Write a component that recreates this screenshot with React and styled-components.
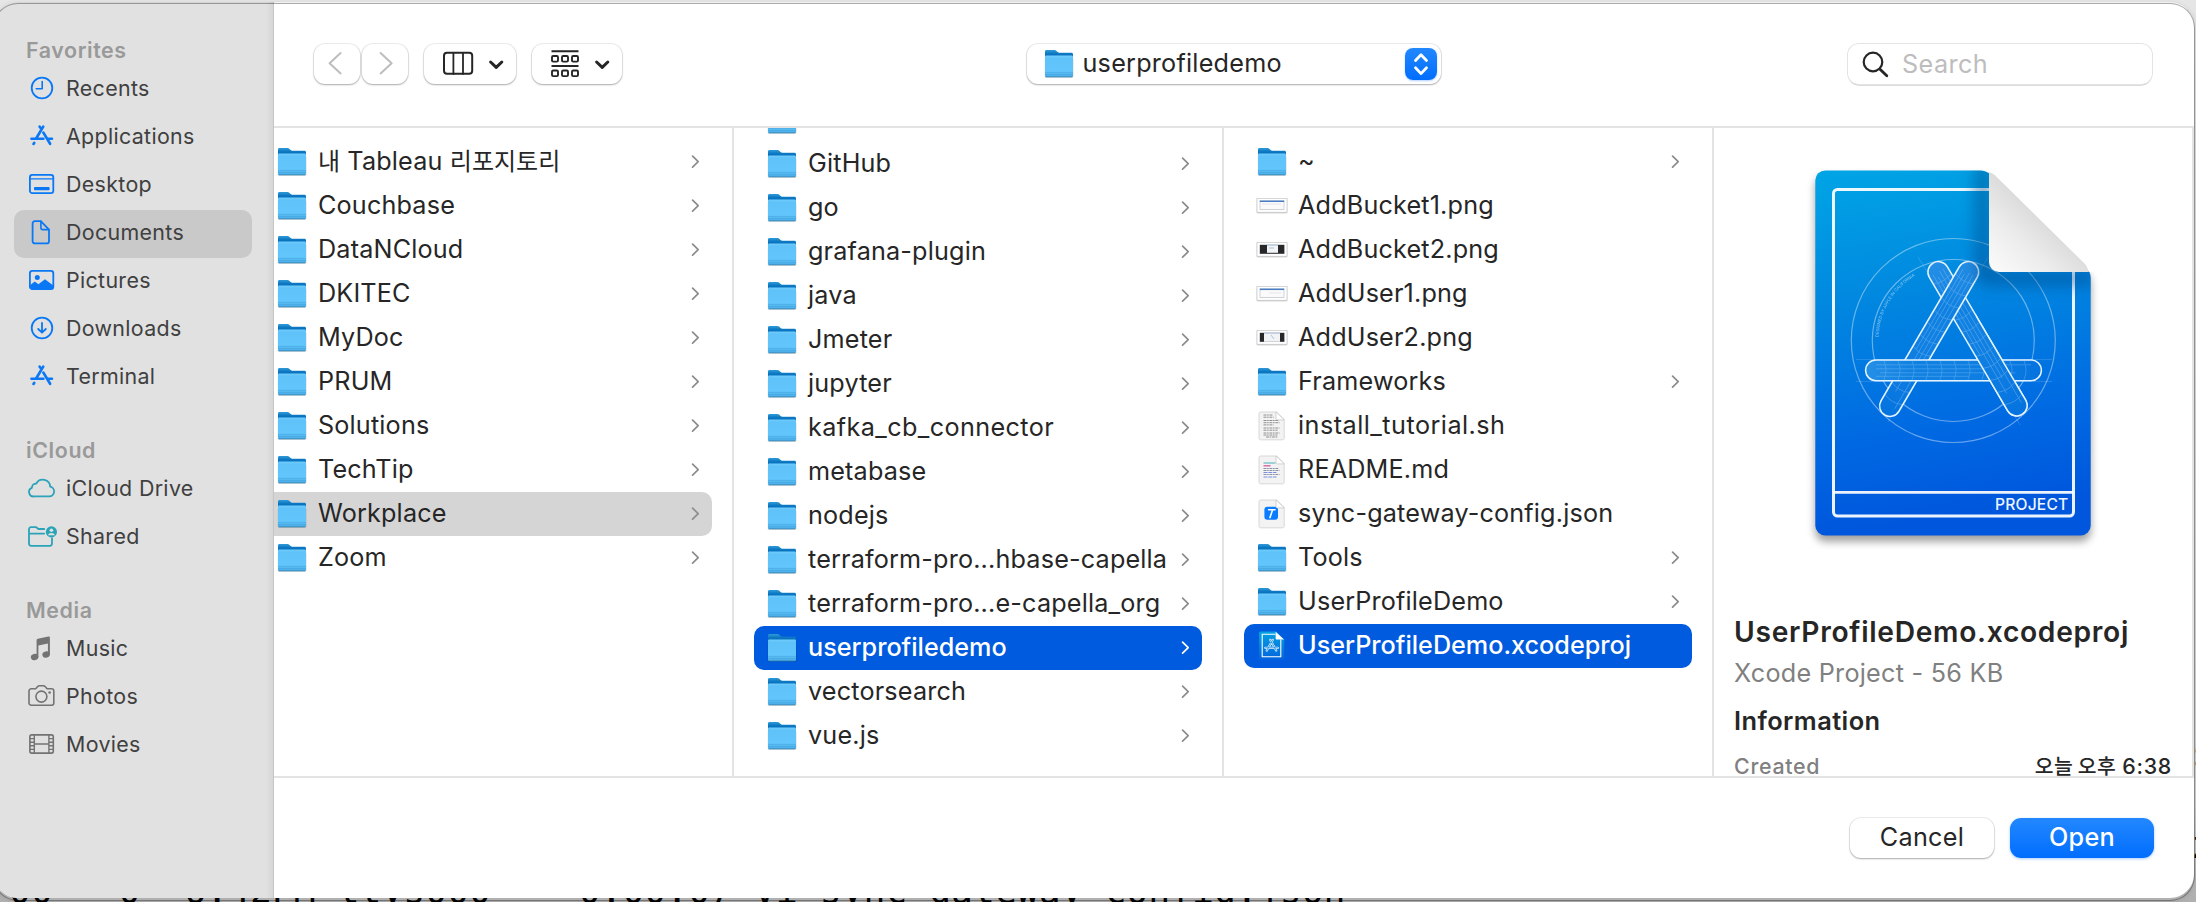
import React from "react";
import styled, { createGlobalStyle, css } from "styled-components";

const sans = `Inter, "Noto Sans CJK KR", "Liberation Sans", sans-serif`;

const GlobalStyle = createGlobalStyle`
  *, *::before, *::after { box-sizing: border-box; }
  body { margin: 0; overflow: hidden; font-family: ${sans}; color: #262626; }
`;

/* ---------- desktop and window ---------- */

const Desktop = styled.div`
  position: relative;
  width: 2196px;
  height: 902px;
  overflow: hidden;
  background: linear-gradient(#e6e6e6 0, #dedede 70px, #cfcfcf 800px, #b0b0b0 895px);
`;

const TerminalText = styled.span`
  position: absolute;
  left: ${(p) => p.$x}px;
  top: ${(p) => p.$y}px;
  font: 36.4px/40px "DejaVu Sans Mono", monospace;
  white-space: pre;
  color: #000;
`;

const Window = styled.main`
  position: relative;
  display: flex;
  width: 2200px;
  height: 896px;
  margin: 2px 0 0 -6px;
  border-radius: 24px;
  background: #fff;
  overflow: hidden;
`;

const WindowFrame = styled.div`
  position: relative;
  width: 2194px;
  height: 898px;
  &::after {
    content: "";
    position: absolute;
    inset: 2px 0 0 -6px;
    border-radius: 24px;
    box-shadow: 0 0 0 1px rgba(0, 0, 0, 0.28), 0 0 5px rgba(0, 0, 0, 0.18);
    pointer-events: none;
  }
`;

/* ---------- sidebar ---------- */

const Sidebar = styled.nav`
  flex: 0 0 280px;
  padding: 0 21px 0 20px;
  background: linear-gradient(90deg, #e1e1e1 272px, #d6d6d6 279px);
  border-right: 1px solid #c6c6c6;
`;

const SectionTitle = styled.h2`
  display: flex;
  align-items: flex-end;
  height: 64px;
  margin: 0;
  padding-left: 12px;
  font-size: 21.4px;
  line-height: 31px;
  font-weight: 600;
  letter-spacing: 0.6px;
  color: #999;
`;

const Place = styled.a`
  display: flex;
  align-items: center;
  gap: 10px;
  height: 48px;
  width: 238px;
  padding-left: 14px;
  border-radius: 10px;
  font-size: 21.4px;
  letter-spacing: 0.33px;
  color: #404040;
  background: ${(p) => (p.$active ? "#c9c9c9" : "transparent")};
`;

const PlaceIcon = styled.svg`
  flex: none;
  width: 28px;
  height: 28px;
  overflow: visible;
  margin-bottom: 5px;
  color: ${(p) => p.$tint};
  fill: none;
  stroke: currentColor;
  stroke-width: 1.8;
  stroke-linecap: round;
  stroke-linejoin: round;
`;

const PlaceName = styled.span`
  padding-bottom: 5px;
`;

/* ---------- toolbar ---------- */

const Content = styled.section`
  flex: 1;
  min-width: 0;
  display: flex;
  flex-direction: column;
`;

const Toolbar = styled.header`
  display: grid;
  grid-template-columns: 1fr auto 1fr;
  align-items: center;
  height: 126px;
  padding: 0 42px 0 40px;
  border-bottom: 2px solid #e3e3e3;
`;

const ToolGroup = styled.div`
  display: flex;
  gap: ${(p) => p.$gap}px;
`;

const raised = css`
  border: 0;
  background: #fff;
  border-radius: 11px;
  box-shadow: 0 0 0 1px rgba(0, 0, 0, 0.07), 0 1px 2px rgba(0, 0, 0, 0.28);
`;

const ToolButton = styled.button`
  ${raised}
  display: flex;
  align-items: center;
  justify-content: center;
  width: ${(p) => p.$width}px;
  height: 40px;
  padding: 0;
`;

const ToolGlyph = styled.svg`
  display: block;
  fill: none;
  stroke: ${(p) => p.$ink || "#262626"};
  stroke-linecap: round;
  stroke-linejoin: round;
`;

const PathPopup = styled.button`
  ${raised}
  display: flex;
  align-items: center;
  width: 414px;
  height: 40px;
  margin-left: 1px;
  padding: 0 4px 0 17px;
  font: 400 25.2px ${sans};
  letter-spacing: 0.23px;
  color: #262626;
`;

const PathName = styled.span`
  flex: 1;
  padding: 0 0 2px 9px;
  text-align: left;
`;

const Stepper = styled.span`
  display: flex;
  align-items: center;
  justify-content: center;
  width: 32px;
  height: 32px;
  border-radius: 8px;
  background: linear-gradient(#2388ff, #006dfd);
  box-shadow: 0 1px 2px rgba(0, 100, 255, 0.3);
`;

const SearchField = styled.label`
  justify-self: end;
  display: flex;
  align-items: center;
  width: 304px;
  height: 40px;
  padding-left: 14px;
  border-radius: 11px;
  box-shadow: 0 0 0 1px #e4e4e4, 0 1.5px 0 #b9b9b9;
  background: #fff;
`;

const SearchHint = styled.span`
  padding: 0 0 0 13px;
  font-size: 25.2px;
  letter-spacing: 0.4px;
  color: #bdbdbd;
`;

/* ---------- column browser ---------- */

const Browser = styled.div`
  display: flex;
  height: 650px;
  overflow: hidden;
  border-bottom: 2px solid #e3e3e3;
`;

const Column = styled.ul`
  flex: 0 0 490px;
  height: 648px;
  margin: 0 0 0 ${(p) => (p.$scrolledX ? -p.$scrolledX : 0)}px;
  padding: 0 20px;
  overflow: hidden;
  list-style: none;
  border-right: 2px solid #e3e3e3;
`;

const ColumnItems = styled.div`
  margin-top: ${(p) => p.$offset}px;
`;

const rowTone = {
  none: css`color: #262626;`,
  path: css`color: #262626; background: #d5d5d5;`,
  active: css`color: #fff; background: #005bde; font-weight: 500; letter-spacing: 0;`,
};

const Row = styled.li`
  display: flex;
  align-items: center;
  height: 44px;
  padding: 0 13px;
  border-radius: 10px;
  font-size: 25.2px;
  letter-spacing: ${(p) => p.$track ?? 0.17}px;
  white-space: nowrap;
  ${(p) => rowTone[p.$tone]}
`;

const RowName = styled.span`
  flex: 1;
  padding: 0 0 2px 11px;
`;

const Hangul = styled.span`
  font-family: "Noto Sans CJK KR", sans-serif;
  font-size: ${(p) => p.$size}px;
  letter-spacing: ${(p) => p.$track || 0}px;
  line-height: 1;
`;

const FileIcon = styled.svg`
  flex: none;
  display: block;
  width: 30px;
  height: 30px;
  overflow: visible;
`;

/* ---------- preview ---------- */

const Preview = styled.aside`
  flex: 1;
  height: 648px;
  padding: 32px 20px 0 20px;
  overflow: hidden;
  border-right: 2px solid #e3e3e3;
  line-height: 32px;
`;

const Artwork = styled.svg`
  display: block;
  margin-left: 66px;
  width: 310px;
  height: 390px;
`;

const PreviewTitle = styled.h1`
  margin: 64px 0 0;
  font-size: 28.2px;
  line-height: 36px;
  font-weight: 600;
  letter-spacing: 0.7px;
  white-space: nowrap;
`;

const PreviewKind = styled.p`
  margin: 7px 0 0;
  font-size: 25.2px;
  letter-spacing: 0.26px;
  color: #808080;
`;

const PreviewHeading = styled.h2`
  margin: 16px 0 0;
  font-size: 25.4px;
  font-weight: 600;
  letter-spacing: 0.45px;
`;

const Fact = styled.div`
  display: flex;
  justify-content: space-between;
  margin-top: 15px;
  font-size: 21.4px;
  line-height: 28px;
  font-weight: 500;
  letter-spacing: 0.7px;
`;

const FactName = styled.span`
  color: #808080;
`;

/* ---------- footer ---------- */

const Footer = styled.footer`
  flex: 1;
  display: flex;
  align-items: center;
  justify-content: flex-end;
  gap: 16px;
  padding-right: 40px;
`;

const DialogButton = styled.button`
  ${raised}
  width: 144px;
  height: 40px;
  padding: 0 0 2px;
  font: 400 25.2px ${sans};
  letter-spacing: 0.3px;
  color: #262626;
  ${(p) =>
    p.$primary &&
    css`
      color: #fff;
      font-weight: 500;
      background: linear-gradient(#2388ff, #006dfd);
      box-shadow: 0 1px 3px rgba(0, 110, 255, 0.35);
    `}
`;

/* ---------- drawings ---------- */

const sidebarGlyphs = {
  clock: (
    <>
      <circle cx="14" cy="14" r="10.3" />
      <path d="M14.2 7.5v7.2H8.2" strokeWidth="1.6" />
    </>
  ),
  apps: (
    <g strokeWidth="2.7">
      <path d="M15.2 4.6 8.3 16.2M11.6 4.6l.6 1M15.4 10.6l6.7 11.2M6.2 20.9l-.7 1" />
      <path d="M3.4 16.8h12M20.6 16.8h3.4" strokeWidth="2.5" />
    </g>
  ),
  desktop: (
    <>
      <rect x="1.9" y="4.9" width="23.4" height="18.2" rx="2.4" />
      <path d="M2 8.9h23.2" strokeWidth="1.4" />
      <rect x="6" y="17" width="15.6" height="3.2" rx=".8" fill="currentColor" stroke="none" />
    </>
  ),
  document: (
    <>
      <path d="M6.8 3.2h6l8.2 8.4v11.6a2.2 2.2 0 0 1-2.2 2.2H6.8a2.2 2.2 0 0 1-2.2-2.2V5.4a2.2 2.2 0 0 1 2.2-2.2Z" />
      <path d="M12.9 3.4v6.4a1.8 1.8 0 0 0 1.8 1.8h6.2" strokeWidth="1.6" />
    </>
  ),
  picture: (
    <>
      <rect x="1.9" y="4.9" width="23.4" height="18.2" rx="2.4" />
      <circle cx="9.3" cy="11.4" r="2.5" fill="currentColor" stroke="none" />
      <path d="m2.2 19 4.6-3.4 3.6 2.6 6.6-5 8 6v2.6a1.6 1.6 0 0 1-1.6 1.6H4a1.8 1.8 0 0 1-1.8-1.8Z" fill="currentColor" stroke="none" />
    </>
  ),
  download: (
    <>
      <circle cx="14" cy="14" r="10.3" />
      <path d="M14 8.8v9.6M10.2 15l3.8 3.7 3.8-3.7" />
    </>
  ),
  cloud: <path d="M6.4 22.4h14.9a4.9 4.9 0 0 0 .9-9.7 7.4 7.4 0 0 0-13.9-3.2 4.4 4.4 0 0 0-4.4 4.3 4.5 4.5 0 0 0 2.5 8.6Z" />,
  shared: (
    <>
      <path d="M16.2 7H10.4L8.2 5.2H3A2 2 0 0 0 1 7.2v14.4a2.2 2.2 0 0 0 2.2 2.2h18.6a2.2 2.2 0 0 0 2.2-2.2v-5.4M1.2 11.6h15" />
      <circle cx="23.4" cy="9.9" r="5.6" fill="currentColor" stroke="none" />
      <circle cx="23.4" cy="8.2" r="1.8" fill="#e1e1e1" stroke="none" />
      <path d="M19.9 13.2a3.6 2.8 0 0 1 7 0Z" fill="#e1e1e1" stroke="none" />
    </>
  ),
  music: (
    <g fill="currentColor" stroke="none">
      <ellipse cx="6.6" cy="23" rx="3.8" ry="3.1" transform="rotate(-16 6.6 23)" />
      <ellipse cx="18.1" cy="20.5" rx="3.8" ry="3.1" transform="rotate(-16 18.1 20.5)" />
      <path d="M8.6 6.2a1.5 1.5 0 0 1 1.2-1.5L20.4 2.6c.8-.2 1.5.3 1.5 1.1v17h-2V9.6L10.4 11.5V23H8.6Z" />
    </g>
  ),
  camera: (
    <>
      <path d="M3.2 6.800h4.500l2-2.300c.4-.5 1-.8 1.700-.8h4c.7 0 1.300.3 1.700.8l2 2.300h4.500a2.200 2.200 0 0 1 2.200 2.200v12a2.200 2.200 0 0 1-2.200 2.200H3.200A2.200 2.200 0 0 1 1 21V9a2.200 2.200 0 0 1 2.200-2.200Z" strokeWidth="1.6" />
      <circle cx="13.4" cy="14.6" r="5.5" strokeWidth="1.6" />
      <circle cx="21.6" cy="10.5" r="1.3" fill="currentColor" stroke="none" />
    </>
  ),
  film: (
    <g strokeWidth="1.6">
      <rect x="1.9" y="4.9" width="23.4" height="18.2" rx="1.8" />
      <path d="M6.3 5v18M20.9 5v18M6.3 14h14.6M2 8.6h4.3M2 12.2h4.3M2 15.8h4.3M2 19.4h4.3M20.9 8.6h4.3M20.9 12.2h4.3M20.9 15.8h4.3M20.9 19.4h4.3" strokeWidth="1.4" />
    </g>
  ),
};

const HiddenDefs = styled.svg`
  display: block;
  width: 0;
  height: 0;
`;

function GradientDefs() {
  return (
    <HiddenDefs aria-hidden="true">
      <defs>
        <linearGradient id="folderBack" x1="0" y1="0" x2="0" y2="1">
          <stop offset="0" stopColor="#2f9bd8" />
          <stop offset=".3" stopColor="#0a74c0" />
          <stop offset="1" stopColor="#0a74c0" />
        </linearGradient>
        <linearGradient id="folderFront" x1="0" y1="0" x2="0" y2="1">
          <stop offset="0" stopColor="#72cdfb" />
          <stop offset=".12" stopColor="#5fc3fa" />
          <stop offset=".75" stopColor="#62c5fb" />
          <stop offset="1" stopColor="#45a9e4" />
        </linearGradient>
        <linearGradient id="miniProject" x1="0" y1="0" x2="0" y2="1">
          <stop offset="0" stopColor="#04a3e2" />
          <stop offset="1" stopColor="#0363dd" />
        </linearGradient>
      </defs>
    </HiddenDefs>
  );
}

function Folder() {
  return (
    <FileIcon viewBox="0 0 30 30">
      <rect x=".8" y="9" width="28.6" height="19.8" rx="1.5" fill="#000" opacity=".18" />
      <path d="M1 2.6C1 1.7 1.6 1 2.5 1h8c.8 0 1.4.3 2 .9l1.1 1.2c.4.5 1 .7 1.7.7h12.2c.9 0 1.5.7 1.5 1.5V14H1Z" fill="url(#folderBack)" />
      <path d="M1 7.9c0-.8.6-1.4 1.4-1.4h25.2c.8 0 1.4.6 1.4 1.4v18.8c0 .8-.6 1.4-1.4 1.4H2.4c-.8 0-1.4-.6-1.4-1.4Z" fill="url(#folderFront)" />
      <path d="M1 23.4h28M1 25.4h28" stroke="#3f9fd8" strokeWidth=".7" opacity=".7" />
      <path d="M1.8 27.9h26.4" stroke="#3a86b5" strokeWidth=".8" />
    </FileIcon>
  );
}

function Thumbnail({ dark, narrow }) {
  return (
    <FileIcon viewBox="0 0 30 30">
      <rect x="-.4" y="7.8" width="30.8" height="14.6" rx="1" fill="#000" opacity=".16" />
      <rect x="0" y="7.4" width="30" height="13.8" fill="#fff" stroke="#bdbdbd" strokeWidth=".6" />
      {dark ? (
        <>
          <rect x="2.8" y="9.8" width="24.6" height="9" fill="#26282b" />
          <rect x={narrow ? 7 : 10} y="9.8" width={narrow ? 16 : 11} height={narrow ? 9 : 8} fill="#f1f3f5" />
          <path d={narrow ? "M7 10.2h16M14 12l3 4" : "M10 10.2h11M12 13h5"} stroke="#9db9d8" strokeWidth=".8" />
        </>
      ) : (
        <>
          <rect x="3" y="10" width="24" height="8.6" fill="#fafafa" stroke="#b8c0ca" strokeWidth=".7" />
          <path d="M2.8 10.3h24.4" stroke="#4a7cc4" strokeWidth="1.5" />
          <path d={narrow ? "M12 14h12" : "M5 13h19"} stroke="#d5dbe2" strokeWidth=".7" />
        </>
      )}
    </FileIcon>
  );
}

function Paper({ children }) {
  return (
    <FileIcon viewBox="0 0 30 30">
      <path d="M3.6 1h16l7.6 7.6v18.6c0 .9-.6 1.6-1.5 1.6H3.6c-.9 0-1.6-.7-1.6-1.6V2.6C2 1.7 2.7 1 3.6 1Z" fill="#f3f3f3" stroke="#cfcfcf" strokeWidth=".8" />
      {children}
      <path d="M19 .9 27.4 8.9h-7.2c-.7 0-1.2-.5-1.2-1.2Z" fill="#fff" stroke="#c2c2c2" strokeWidth=".7" />
    </FileIcon>
  );
}

const fileIcons = {
  folder: <Folder />,
  light: <Thumbnail />,
  lightUser: <Thumbnail narrow />,
  dark: <Thumbnail dark />,
  darkUser: <Thumbnail dark narrow />,
  script: (
    <Paper>
      <path d="M6.5 4h9M6.5 6.2h10M6.5 9.5h15M6.5 11.7h16M6.5 13.9h10M6.5 17h16M6.5 19.2h14M6.5 22h16M6.5 24h14M9 26h12" stroke="#8f8f8f" strokeWidth="1" strokeDasharray="3 .6 1.6 .7" />
    </Paper>
  ),
  markdown: (
    <Paper>
      <path d="M6.5 8h12" stroke="#58b5bd" strokeWidth="1.1" />
      <path d="M6.5 10.8h7" stroke="#d957a0" strokeWidth="1.3" />
      <path d="M6.5 13.5h15M6.5 15.5h16M6.5 19.5h16" stroke="#8d93a8" strokeWidth="1" strokeDasharray="3 .6 1.6 .7" />
      <path d="M6.5 17.5h13M6.5 22h13" stroke="#7d8ee0" strokeWidth="1" strokeDasharray="4 .8" />
    </Paper>
  ),
  json: (
    <Paper>
      <rect x="7.4" y="7.7" width="13.6" height="13" rx="3" fill="#0a7cff" />
      <path d="M11.6 10.8h6.4M15.600 10.800 13 18.600" stroke="#fff" strokeWidth="1.6" strokeLinecap="round" fill="none" />
    </Paper>
  ),
  project: (
    <FileIcon viewBox="0 0 30 30">
      <path d="M3.6.6h15.6l8 8v18.600c0 .9-.6 1.600-1.500 1.600H3.600c-.9 0-1.600-.7-1.600-1.600v-25C2 1.300 2.700.6 3.600.6Z" fill="url(#miniProject)" />
      <path d="M18.4 3.2H5.2v22.6h18.6V8.6" fill="none" stroke="#fff" strokeWidth="1.1" />
      <path d="M18.6.8 27 8.6h-7.2c-.7 0-1.2-.5-1.2-1.2Z" fill="#fff" />
      <path d="M15.8 8.8 9.8 19.5M13.2 8.8l6 10.7M8.2 16.8h12.8" stroke="#d8efff" strokeWidth="2.2" strokeLinecap="round" />
      <path d="M15.8 8.8 9.8 19.5M13.2 8.8l6 10.7M8.2 16.8h12.8" stroke="#0c80e0" strokeWidth=".7" strokeLinecap="round" />
    </FileIcon>
  ),
};

function RowChevron({ light }) {
  return (
    <ToolGlyph width="8" height="14" viewBox="0 0 8 14" strokeWidth="1.7" $ink={light ? "#fff" : "#8c8c8c"}>
      <path d="M1.6 1.2 7.2 6.700l-5.600 5.500" />
    </ToolGlyph>
  );
}

function ProjectArtwork() {
  const capsule = (x1, y1, x2, y2, key) => {
    const length = Math.hypot(x2 - x1, y2 - y1);
    const angle = (Math.atan2(y2 - y1, x2 - x1) * 180) / Math.PI;
    const ribs = [];
    for (let d = 8; d < length - 4; d += 14) ribs.push(d);
    return (
      <g key={key} transform={`translate(${x1} ${y1}) rotate(${angle})`}>
        <rect x="-10.4" y="-10.4" width={length + 20.8} height="20.8" rx="10.4" fill="#0a7de0" />
        <rect x="-10.4" y="-10.4" width={length + 20.8} height="20.8" rx="10.4" fill="url(#tubeSheen)" stroke="#e3f3ff" strokeWidth="1.5" />
        <g fill="none" stroke="#bfe2fb" strokeWidth=".8" opacity=".3">
          <path d={`M0-5.5H${length}M0-1.5H${length * 0.8}M4 2.5H${length * 0.9}M0 6H${length * 0.6}`} />
          {ribs.map((d) => (
            <path key={d} d={`M${d}-9.5q4 9.5 0 19`} />
          ))}
        </g>
      </g>
    );
  };
  return (
    <Artwork viewBox="1800 160 310 390">
      <defs>
        <linearGradient id="sheet" x1="0" y1="0" x2=".12" y2="1">
          <stop offset="0" stopColor="#00a5e5" />
          <stop offset=".35" stopColor="#0189e0" />
          <stop offset=".75" stopColor="#0069e2" />
          <stop offset="1" stopColor="#0056dc" />
        </linearGradient>
        <linearGradient id="curl" x1="0" y1="1" x2=".5" y2=".46">
          <stop offset="0" stopColor="#fcfcfc" />
          <stop offset=".6" stopColor="#ececec" />
          <stop offset="1" stopColor="#dcdcdc" />
        </linearGradient>
        <linearGradient id="tubeSheen" x1="0" y1="0" x2="1" y2="0">
          <stop offset="0" stopColor="#5cb4f2" stopOpacity=".35" />
          <stop offset=".3" stopColor="#2f95ea" stopOpacity=".15" />
          <stop offset="1" stopColor="#0068df" stopOpacity=".5" />
        </linearGradient>
        <path id="sheetOutline" d="M1825.3 170.4H1980q6 0 10.5 4L2086 267q4.7 5 4.7 11V525.4a10 10 0 0 1-10 10H1825.3a10 10 0 0 1-10-10V180.4a10 10 0 0 1 10-10Z" />
        <clipPath id="sheetClip"><use href="#sheetOutline" /></clipPath>
        <clipPath id="lowerRight"><path d="M1976 300H2060V430H1976Z" /></clipPath>
        <filter id="drop" x="-10%" y="-10%" width="120%" height="120%"><feGaussianBlur stdDeviation="4" /></filter>
        <filter id="curlShade" x="-30%" y="-30%" width="160%" height="160%"><feGaussianBlur stdDeviation="8" /></filter>
        <path id="arcText" d="M1878.5 337a75 75 0 0 1 42-64" />
      </defs>
      <use href="#sheetOutline" y="6" fill="#000" opacity=".38" filter="url(#drop)" />
      <use href="#sheetOutline" fill="url(#sheet)" />
      <g clipPath="url(#sheetClip)">
        <g fill="none" stroke="#fff">
          <circle cx="1953.3" cy="340.5" r="102" strokeWidth="1.2" opacity=".4" />
          <circle cx="1953.3" cy="340.5" r="81" strokeWidth="1.2" opacity=".4" />
          <path d="M1918 257 2020 425M1988 257l-100 165M1856 359.6h196M1856 381.4h196" strokeWidth=".8" opacity=".2" />
        </g>
        <text fontSize="4.2" fill="#fff" opacity=".5" fontFamily="Inter, sans-serif">
          <textPath href="#arcText">DESIGNED BY APPLE IN CALIFORNIA</textPath>
        </text>
        {capsule(1938.3, 272, 2016.7, 405.5, "back")}
        {capsule(1968.3, 272, 1890, 406, "front")}
        {capsule(1876, 370.3, 2031, 370.3, "bar")}
        <g clipPath="url(#lowerRight)">{capsule(1938.3, 272, 2016.7, 405.5, "overlap")}</g>
        <rect x="1833.5" y="189.5" width="240" height="326.5" rx="4" fill="none" stroke="#fff" strokeWidth="3" opacity=".93" />
        <path d="M1833.5 492.3h240" stroke="#fff" strokeWidth="2.8" opacity=".93" />
        <path d="M1989 165V262q0 10 10 10h96v12h-106q-12 0-12-12V165Z" fill="#003a78" opacity=".55" filter="url(#curlShade)" />
      </g>
      <path d="M1989 160h121v112H2089L1989 172Z" fill="#fff" />
      <path d="M1989 172.2q3 .3 6 3L2084 263q4 4 4.5 9H1999a10 10 0 0 1-10-10Z" fill="url(#curl)" />
      <text x="1995" y="509.5" fontSize="15.6" fontWeight="500" letterSpacing=".2" fill="#eef5ff" fontFamily="Inter, sans-serif">PROJECT</text>
    </Artwork>
  );
}

/* ---------- data ---------- */

const blue = "#0a78f5";
const teal = "#2ba3b8";
const grey = "#737373";

const sections = [
  {
    title: "Favorites",
    tint: blue,
    places: [
      ["clock", "Recents"], ["apps", "Applications"], ["desktop", "Desktop"], ["document", "Documents"],
      ["picture", "Pictures"], ["download", "Downloads"], ["apps", "Terminal"],
    ],
  },
  { title: "iCloud", tint: teal, places: [["cloud", "iCloud Drive"], ["shared", "Shared"]] },
  { title: "Media", tint: grey, places: [["music", "Music"], ["camera", "Photos"], ["film", "Movies"]] },
];

const folders = (names) => names.map((name) => ({ name, icon: "folder" }));

const documents = [
  { key: "tableau", icon: "folder", name: <><Hangul $size={24}>내</Hangul> Tableau <Hangul $size={24}>리포지토리</Hangul></> },
  ...folders(["Couchbase", "DataNCloud", "DKITEC", "MyDoc", "PRUM", "Solutions", "TechTip", "Workplace", "Zoom"]),
];

const workplace = [
  ...folders(["Couchbase", "GitHub", "go", "grafana-plugin", "java", "Jmeter", "jupyter"]),
  { name: "kafka_cb_connector", icon: "folder", track: 0.4 },
  ...folders([
    "metabase", "nodejs", "terraform-pro...hbase-capella", "terraform-pro...e-capella_org",
    "userprofiledemo", "vectorsearch", "vue.js",
  ]),
];

const project = [
  { name: "~", icon: "folder" },
  { name: "AddBucket1.png", icon: "light" },
  { name: "AddBucket2.png", icon: "dark" },
  { name: "AddUser1.png", icon: "lightUser" },
  { name: "AddUser2.png", icon: "darkUser" },
  { name: "Frameworks", icon: "folder" },
  { name: "install_tutorial.sh", icon: "script", track: 0.48 },
  { name: "README.md", icon: "markdown" },
  { name: "sync-gateway-config.json", icon: "json" },
  { name: "Tools", icon: "folder" },
  { name: "UserProfileDemo", icon: "folder" },
  { name: "UserProfileDemo.xcodeproj", icon: "project" },
];

function FileColumn({ items, selected, tone, offset, scrolledX }) {
  return (
    <Column $scrolledX={scrolledX}>
      <ColumnItems $offset={offset}>
        {items.map((item) => {
          const state = item.name === selected ? tone : "none";
          return (
            <Row key={item.key || item.name} $tone={state} $track={item.track}>
              {fileIcons[item.icon]}
              <RowName>{item.name}</RowName>
              {item.icon === "folder" && <RowChevron light={state === "active"} />}
            </Row>
          );
        })}
      </ColumnItems>
    </Column>
  );
}

export default function App() {
  return (
    <Desktop>
      <GlobalStyle />
      <TerminalText $x={9} $y={871}>00   0  6:42PM ttys000    0:00.07 vi sync-gateway-config.json</TerminalText>
      <TerminalText $x={2192} $y={734}>s</TerminalText>
      <TerminalText $x={2191} $y={826}>z</TerminalText>
      <GradientDefs />
      <WindowFrame>
        <Window>
          <Sidebar>
            {sections.map((section) => (
              <React.Fragment key={section.title}>
                <SectionTitle>{section.title}</SectionTitle>
                {section.places.map(([icon, name]) => (
                  <Place key={name} $active={name === "Documents"}>
                    <PlaceIcon viewBox="0 0 28 28" $tint={section.tint}>{sidebarGlyphs[icon]}</PlaceIcon>
                    <PlaceName>{name}</PlaceName>
                  </Place>
                ))}
              </React.Fragment>
            ))}
          </Sidebar>
          <Content>
            <Toolbar>
              <ToolGroup $gap={16}>
                <ToolGroup $gap={2}>
                  <ToolButton $width={46}>
                    <ToolGlyph width="46" height="40" strokeWidth="2" $ink="#bdbdbd"><path d="M26.6 9 15.6 19.2l11 10.2" /></ToolGlyph>
                  </ToolButton>
                  <ToolButton $width={46}>
                    <ToolGlyph width="46" height="40" strokeWidth="2" $ink="#bdbdbd"><path d="m18.6 9 11 10.2-11 10.2" /></ToolGlyph>
                  </ToolButton>
                </ToolGroup>
                <ToolButton $width={92}>
                  <ToolGlyph width="92" height="40" strokeWidth="2">
                    <rect x="20" y="8.8" width="28.2" height="21" rx="3" />
                    <path d="M29.4 9v21M39 9v21" strokeWidth="1.8" />
                    <path d="m66.600 18 5.600 5.400 5.600-5.400" strokeWidth="3" />
                  </ToolGlyph>
                </ToolButton>
                <ToolButton $width={90}>
                  <ToolGlyph width="90" height="40" strokeWidth="1.9">
                    <path d="M19.500 7.200h27M19.500 22h27" strokeLinecap="butt" />
                    {[20, 30, 40].map((x) => (
                      <React.Fragment key={x}>
                        <rect x={x} y="12" width="6" height="5.6" rx="1.2" />
                        <rect x={x} y="26.5" width="6" height="5.6" rx="1.2" />
                      </React.Fragment>
                    ))}
                    <path d="m64.600 18 5.600 5.400 5.600-5.400" strokeWidth="3" />
                  </ToolGlyph>
                </ToolButton>
              </ToolGroup>
              <PathPopup>
                <Folder />
                <PathName>userprofiledemo</PathName>
                <Stepper>
                  <ToolGlyph width="32" height="32" strokeWidth="2.8" $ink="#fff"><path d="m10.5 12.500 5.500-5.800 5.500 5.800M10.500 19.800l5.500 5.800 5.500-5.800" /></ToolGlyph>
                </Stepper>
              </PathPopup>
              <SearchField>
                <ToolGlyph width="27" height="27" strokeWidth="2.2">
                  <circle cx="11" cy="11" r="9.3" />
                  <path d="m18 18.2 6.8 6.6" strokeWidth="2.8" />
                </ToolGlyph>
                <SearchHint>Search</SearchHint>
              </SearchField>
            </Toolbar>
            <Browser>
              <FileColumn items={documents} selected="Workplace" tone="path" offset={12} scrolledX={30} />
              <FileColumn items={workplace} selected="userprofiledemo" tone="active" offset={-30} />
              <FileColumn items={project} selected="UserProfileDemo.xcodeproj" tone="active" offset={12} />
              <Preview>
                <ProjectArtwork />
                <PreviewTitle>UserProfileDemo.xcodeproj</PreviewTitle>
                <PreviewKind>Xcode Project - 56 KB</PreviewKind>
                <PreviewHeading>Information</PreviewHeading>
                <Fact>
                  <FactName>Created</FactName>
                  <span><Hangul $size={20.4} $track={0.3}>오늘 오후</Hangul> 6:38</span>
                </Fact>
              </Preview>
            </Browser>
            <Footer>
              <DialogButton>Cancel</DialogButton>
              <DialogButton $primary>Open</DialogButton>
            </Footer>
          </Content>
        </Window>
      </WindowFrame>
    </Desktop>
  );
}
